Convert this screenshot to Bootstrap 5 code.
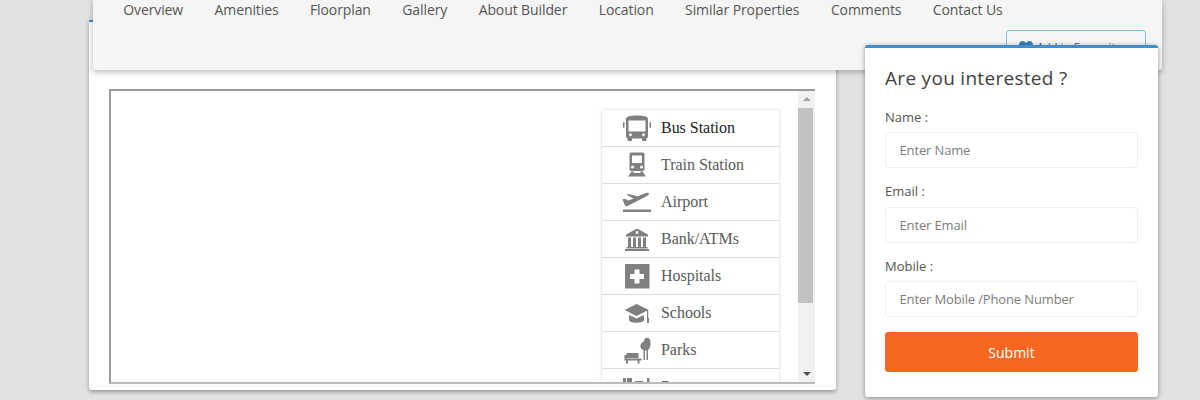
<!DOCTYPE html>
<html lang="en">
<head>
<meta charset="utf-8">
<title>Property</title>
<link href="https://cdn.jsdelivr.net/npm/bootstrap@5.3.0/dist/css/bootstrap.min.css" rel="stylesheet">
<style>
html,body{height:400px;overflow:hidden}
body{background:#e2e2e2;font-family:"Open Sans",sans-serif;color:#555;position:relative}
.page-wrap{padding-left:89px;width:1162px}
.top-tabs{position:relative;z-index:2;margin-left:4px;height:70px;background:#f5f5f5;box-shadow:0 2px 6px rgba(0,0,0,.28);border-radius:0 0 3px 3px;padding-left:14.500px}
.tab-links{height:20px}
.tab-links a{color:#555;font-size:14px;line-height:20px;padding:0 15.725px;text-decoration:none;white-space:nowrap;letter-spacing:-.1px}
.fav-btn{position:absolute;left:913px;top:30px;width:140px;height:30px;border:1px solid #7fc4de;border-radius:3px;background:#f5f5f5;color:#556;font-size:11px;padding:7px 0 0 12px;white-space:nowrap;line-height:18px}
.fav-btn svg{width:14px;height:12px;vertical-align:-2px;margin-right:4px}
.main-panel{margin-top:-50px;width:747px;height:370px;background:#fff;border-top:2px solid #3c8dc9;box-shadow:0 2px 4px rgba(0,0,0,.35);border-radius:0 0 3px 3px;padding:67px 21px 0 20px;position:relative;z-index:1}
.map-frame{height:295px;border:2px solid #9a9a9a;border-right:0;border-bottom-color:#bbb;overflow:hidden}
.map-canvas{padding:18px 0 0 490px;min-width:0}
.poi-list{width:179px;border:1px solid #ececec;border-bottom:0;border-radius:3px 3px 0 0;box-shadow:0 0 3px rgba(0,0,0,.08)}
.poi-row{height:37px;border-bottom:1px solid #dcdcdc;font-family:"Liberation Serif",serif;font-size:16px;color:#5a5a5a;flex:none;letter-spacing:-.03px}
.poi-row.on{color:#222}
.poi-ico{width:59px;flex:none;display:flex;justify-content:center;padding-left:10px}
.poi-ico svg{width:30px;height:30px;fill:#808080;display:block}
.fake-scroll{width:17px;flex:none;background:#f1f1f1;display:flex;flex-direction:column;align-items:center}
.arrow-up,.arrow-dn{width:0;height:0;border-left:4px solid transparent;border-right:4px solid transparent}
.arrow-up{border-bottom:4px solid #a3a3a3;margin-top:6px}
.arrow-dn{border-top:4px solid #505050;margin-top:auto;margin-bottom:6px}
.thumb{width:15px;height:195px;background:#c1c1c1;margin-top:7px;align-self:flex-start}
.lead-card{position:absolute;z-index:3;left:865px;top:45px;width:293px;height:352px;background:#fff;border-top:3px solid #3b8fd0;border-radius:3px;box-shadow:0 1px 5px rgba(0,0,0,.4);padding:17px 20px 0}
.lead-title{font-size:19px;font-weight:400;color:#3f3f3f;line-height:26px;margin:0 0 16px;letter-spacing:.3px}
.lead-label{font-size:13px;line-height:20px;color:#555;margin:0 0 5px;display:block}
.lead-input{height:36px;border:1px solid #efefef;border-radius:3px;font-size:13px;padding:0 13.500px;color:#555;margin-bottom:13px;box-shadow:none;letter-spacing:-.14px}
.lead-input::placeholder{color:#7d7d7d;opacity:1}
.mb-mid-label{margin-bottom:6px}
.mb-last{margin-bottom:15px}
.lead-submit{height:40px;background:#f66822;border:0;border-radius:3px;color:#fff;font-size:14px;width:100%}
</style>
</head>
<body>
<div class="page-wrap">
  <div class="top-tabs">
    <nav class="tab-links d-flex align-items-center">
      <a href="#">Overview</a><a href="#">Amenities</a><a href="#">Floorplan</a><a href="#">Gallery</a><a href="#">About Builder</a><a href="#">Location</a><a href="#">Similar Properties</a><a href="#">Comments</a><a href="#">Contact Us</a>
    </nav>
    <div class="fav-btn"><svg viewBox="0 0 14 12"><path fill="#3f7fb5" d="M7 12 1 6C-1 3.500.5 0 3.500 0 5 0 6.300.8 7 2 7.700.8 9 0 10.500 0 13.500 0 15 3.500 13 6z"/></svg>Add to Favourites</div>
  </div>
  <div class="main-panel">
    <div class="map-frame d-flex">
      <div class="map-canvas flex-grow-1 overflow-hidden">
        <div class="poi-list">
          <div class="poi-row on d-flex align-items-center">
            <span class="poi-ico"><svg viewBox="0 0 30 30"><path fill-rule="evenodd" d="M4 6C4 3.500 8 2.500 15 2.500S26 3.500 26 6V23.500a2 2 0 0 1-1.500 1.900V27a1 1 0 0 1-1 1h-2.500a1 1 0 0 1-1-1v-1.500H10V27a1 1 0 0 1-1 1H6.500a1 1 0 0 1-1-1v-1.600A2 2 0 0 1 4 23.500zM6.500 7.500V18.500h17V7.500zM8.500 20.300a1.500 1.500 0 1 0 0 3 1.500 1.500 0 0 0 0-3zm13 0a1.500 1.500 0 1 0 0 3 1.500 1.500 0 0 0 0-3z"/><rect x="1" y="9" width="1.500" height="6" rx=".7"/><rect x="27.500" y="9" width="1.500" height="6" rx=".7"/></svg></span>Bus Station
          </div>
          <div class="poi-row d-flex align-items-center">
            <span class="poi-ico"><svg viewBox="0 0 30 30"><path fill-rule="evenodd" d="M7.500 4A1.500 1.500 0 0 1 9 2.500h12A1.500 1.500 0 0 1 22.500 4V19a2 2 0 0 1-2 2h-11a2 2 0 0 1-2-2zM10 5.500v7.500h10V5.500zM10.500 15.500a1.500 1.500 0 1 0 0 3 1.500 1.500 0 0 0 0-3zm9 0a1.500 1.500 0 1 0 0 3 1.500 1.500 0 0 0 0-3z"/><path d="M9.500 21.500H12l-.8 1.500h7.600l-.8-1.500h2.500l3.500 5H6z"/></svg></span>Train Station
          </div>
          <div class="poi-row d-flex align-items-center">
            <span class="poi-ico"><svg viewBox="0 0 30 30"><path d="M.5 12.500l2-.8 4 1.800 5-2-7-3.700 2-.9 9 2.400 7-2.800c2-.8 4-1 4.500-.2.300.800-.8 2-2.500 2.900L5.500 19c-1 .4-2 .2-2.500-.5z"/><rect x="1" y="22.500" width="28" height="2.500"/></svg></span>Airport
          </div>
          <div class="poi-row d-flex align-items-center">
            <span class="poi-ico"><svg viewBox="0 0 30 30"><path fill-rule="evenodd" d="M15 4.500 4 10.500v2h22v-2zM15 7a1.500 1.500 0 1 1 0 3 1.500 1.500 0 0 1 0-3z"/><path d="M6 13.500h3v9.500H6zm5 0h3v9.500h-3zm5 0h3v9.500h-3zm5 0h3v9.500h-3z"/><rect x="4.500" y="23" width="21" height="1.500"/><rect x="3" y="25" width="24" height="2"/></svg></span>Bank/ATMs
          </div>
          <div class="poi-row d-flex align-items-center">
            <span class="poi-ico"><svg viewBox="0 0 30 30"><path fill-rule="evenodd" d="M3 3h24.500v24.500H3zM12.500 8.500v4.500H8v5h4.500v4.500h5V18H22v-5h-4.500V8.500z"/></svg></span>Hospitals
          </div>
          <div class="poi-row d-flex align-items-center">
            <span class="poi-ico"><svg viewBox="0 0 30 30"><path d="M14.500 6 2.500 12l12 6 10.500-5.200V20h1.200v-7.800l.8-.2z"/><path d="M7 17v5.500c2 3 13 3 15 0V17l-7.500 3.600z"/><rect x="25" y="20" width="2" height="5"/></svg></span>Schools
          </div>
          <div class="poi-row d-flex align-items-center">
            <span class="poi-ico"><svg viewBox="0 0 30 30"><path d="M4.500 18h12v5h-12zM2.500 23.500h17V25.500h-17zM4 25.500h2V28.500H4zM15.500 25.500h2V28.500h-2zM2.500 20h2v4h-2z"/><path d="M24 3c3-1 5 1.500 4.500 6-.3 3-1 5-2.500 6v10h-1.500V15.500H23V25h-1.500V15c-2.500-.5-3.500-3-3-5 .5-2 2-3 3-3 .5-2 1-3.500 2.500-4z"/></svg></span>Parks
          </div>
          <div class="poi-row d-flex align-items-center">
            <span class="poi-ico"><svg viewBox="0 0 30 30"><path d="M1 6h3v8H1zM5 6h5v8H5zM13 9h8v5h-8zM25 6h2.500v8H25z"/></svg></span>Restaurants
          </div>
        </div>
      </div>
      <div class="fake-scroll">
        <span class="arrow-up"></span>
        <div class="thumb"></div>
        <span class="arrow-dn"></span>
      </div>
    </div>
  </div>
</div>
<aside class="lead-card">
  <h4 class="lead-title">Are you interested ?</h4>
  <form>
    <label class="lead-label">Name :</label>
    <input class="form-control lead-input" placeholder="Enter Name">
    <label class="lead-label mb-mid-label">Email :</label>
    <input class="form-control lead-input" placeholder="Enter Email">
    <label class="lead-label">Mobile :</label>
    <input class="form-control lead-input mb-last" placeholder="Enter Mobile /Phone Number">
    <button type="button" class="btn lead-submit">Submit</button>
  </form>
</aside>
<script src="https://cdn.jsdelivr.net/npm/bootstrap@5.3.0/dist/js/bootstrap.bundle.min.js"></script>
</body>
</html>
